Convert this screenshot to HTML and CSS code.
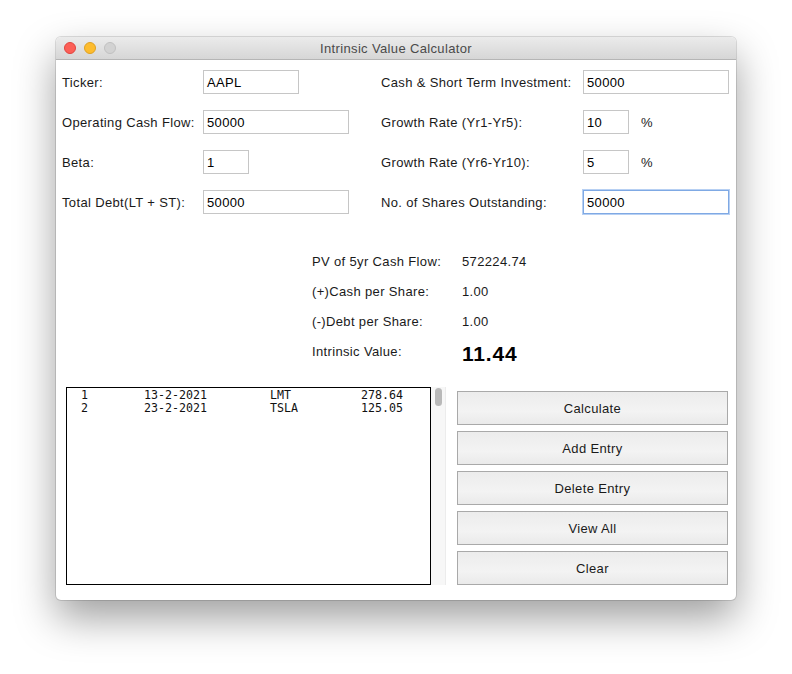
FILE: index.html
```html
<!DOCTYPE html>
<html>
<head>
<meta charset="utf-8">
<link rel="stylesheet" href="styles.css">
</head>
<body>
<div class="window">
  <div class="titlebar">
    <div class="lights">
      <span class="light red"></span>
      <span class="light yellow"></span>
      <span class="light gray"></span>
    </div>
    <div class="title">Intrinsic Value Calculator</div>
  </div>
  <div class="content">
    <div class="form">
      <div class="label">Ticker:</div>
      <div class="field"><div class="input w95">AAPL</div></div>
      <div class="label">Cash &amp; Short Term Investment:</div>
      <div class="field"><div class="input w146">50000</div></div>

      <div class="label">Operating Cash Flow:</div>
      <div class="field"><div class="input w146">50000</div></div>
      <div class="label">Growth Rate (Yr1-Yr5):</div>
      <div class="field"><div class="input w46">10</div><span class="pct">%</span></div>

      <div class="label">Beta:</div>
      <div class="field"><div class="input w46">1</div></div>
      <div class="label">Growth Rate (Yr6-Yr10):</div>
      <div class="field"><div class="input w46">5</div><span class="pct">%</span></div>

      <div class="label">Total Debt(LT + ST):</div>
      <div class="field"><div class="input w146">50000</div></div>
      <div class="label">No. of Shares Outstanding:</div>
      <div class="field"><div class="input w146 focus">50000</div></div>
    </div>

    <div class="results">
      <div class="rlabel">PV of 5yr Cash Flow:</div><div class="rvalue">572224.74</div>
      <div class="rlabel">(+)Cash per Share:</div><div class="rvalue">1.00</div>
      <div class="rlabel">(-)Debt per Share:</div><div class="rvalue">1.00</div>
      <div class="rlabel">Intrinsic Value:</div><div class="rvalue big">11.44</div>
    </div>

    <div class="bottom">
      <div class="listbox"><pre class="rows">1        13-2-2021         LMT          278.64
2        23-2-2021         TSLA         125.05</pre></div>
      <div class="scrollbar"><div class="thumb"></div></div>
      <div class="buttons">
        <div class="btn">Calculate</div>
        <div class="btn">Add Entry</div>
        <div class="btn">Delete Entry</div>
        <div class="btn">View All</div>
        <div class="btn">Clear</div>
      </div>
    </div>
  </div>
</div>
</body>
</html>
```
FILE: styles.css
```css
html, body {
  margin: 0;
  padding: 0;
  background: #ffffff;
}
body {
  font-family: "Liberation Sans", Arial, sans-serif;
  font-size: 13px;
  letter-spacing: 0.35px;
  color: #1a1a1a;
  padding: 37px 0 0 56px;
  height: 674px;
  box-sizing: border-box;
  overflow: hidden;
}
.window {
  width: 680px;
  height: 563px;
  border-radius: 5px;
  background: #ffffff;
  box-shadow: 0 0 0 1px rgba(0,0,0,0.12), 0 18px 40px rgba(0,0,0,0.38);
  overflow: hidden;
  display: flex;
  flex-direction: column;
}
.titlebar {
  height: 22px;
  flex: none;
  background: linear-gradient(#ebebeb, #d6d6d6);
  border-bottom: 1px solid #b5b5b5;
  display: flex;
  align-items: center;
  position: relative;
}
.lights {
  display: flex;
  gap: 8px;
  padding-left: 8px;
  position: relative;
  z-index: 1;
}
.light {
  width: 12px;
  height: 12px;
  border-radius: 50%;
  box-sizing: border-box;
}
.red { background: #fc5f57; border: 1px solid #e0443e; }
.yellow { background: #fdbc2e; border: 1px solid #dea123; }
.gray { background: #d2d2d2; border: 1px solid #c0c0c0; }
.title {
  position: absolute;
  left: 0;
  right: 0;
  text-align: center;
  color: #4a4a4a;
  font-size: 13px;
  top: 4px;
}
.content {
  flex: 1;
  padding: 10px 8px 0 6px;
}
.form {
  display: grid;
  grid-template-columns: 141px 178px 202px 1fr;
  grid-auto-rows: 24px;
  row-gap: 16px;
  align-items: center;
}
.label {
  color: #1a1a1a;
}
.field {
  display: flex;
  align-items: center;
  gap: 12px;
}
.input {
  height: 24px;
  box-sizing: border-box;
  border: 1px solid #c6c6c6;
  padding: 4px 3px 0 3px;
  background: #fff;
  color: #000;
  font-size: 13px;
  line-height: 16px;
}
.w95 { width: 96px; }
.w146 { width: 146px; }
.w46 { width: 46px; }
.focus {
  border: 1px solid #7fa9e4;
  box-shadow: 0 0 0 1px #b7d0f3;
}
.pct { color: #1a1a1a; }
.results {
  margin: 32px 0 0 250px;
  display: grid;
  grid-template-columns: 150px 1fr;
  grid-auto-rows: 30px;
  align-items: center;
}
.rvalue.big {
  font-size: 21px;
  font-weight: bold;
  letter-spacing: 0.8px;
  color: #000;
  padding-top: 5px;
}
.bottom {
  margin: 21px 0 0 4px;
  display: flex;
  align-items: flex-start;
}
.listbox {
  width: 366px;
  height: 198px;
  box-sizing: border-box;
  border: 1px solid #000;
  background: #fff;
}
.rows {
  margin: 0;
  padding: 1px 0 0 14px;
  font-family: "DejaVu Sans Mono", "Liberation Mono", monospace;
  font-size: 11.63px;
  letter-spacing: 0;
  line-height: 13px;
  color: #111;
}
.scrollbar {
  width: 15px;
  height: 198px;
  background: #f7f7f7;
  border-right: 1px solid #ececec;
  box-sizing: border-box;
  padding: 1px 0 0 4px;
}
.thumb {
  width: 7px;
  height: 18px;
  border-radius: 4px;
  background: #b9b9b9;
}
.buttons {
  margin: 4px 0 0 11px;
  display: flex;
  flex-direction: column;
  gap: 6px;
  width: 272px;
}
.btn {
  height: 34px;
  box-sizing: border-box;
  border: 1px solid #a9a9a9;
  background: linear-gradient(#ececec, #f3f3f3 60%, #eaeaea);
  display: flex;
  align-items: center;
  justify-content: center;
  color: #1a1a1a;
}
```
